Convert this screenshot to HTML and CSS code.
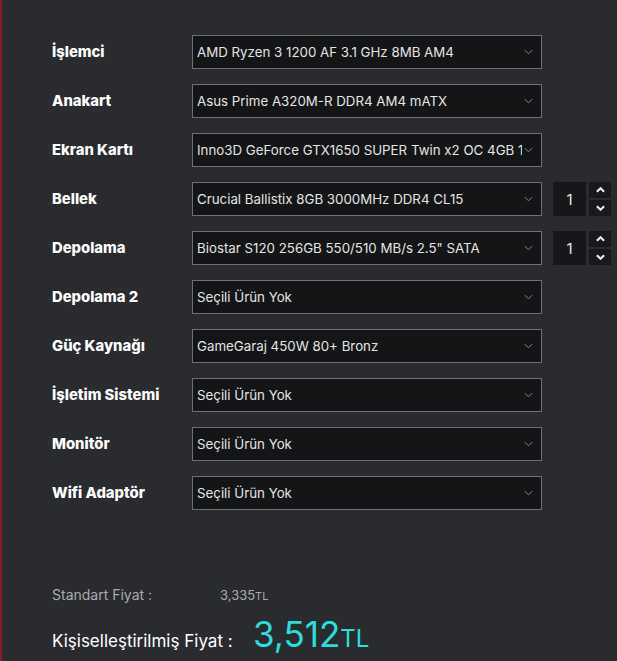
FILE: index.html
```html
<!DOCTYPE html>
<html lang="tr">
<head>
<meta charset="utf-8">
<link rel="stylesheet" href="styles.css">
</head>
<body>
<div class="page">
  <div class="form">
    <div class="row"><div class="label">İşlemci</div><div class="select"><span class="val">AMD Ryzen 3 1200 AF 3.1 GHz 8MB AM4</span><svg class="chev" viewBox="0 0 10 6"><path d="M1 1l4 4 4-4"/></svg></div></div>
    <div class="row"><div class="label">Anakart</div><div class="select"><span class="val">Asus Prime A320M-R DDR4 AM4 mATX</span><svg class="chev" viewBox="0 0 10 6"><path d="M1 1l4 4 4-4"/></svg></div></div>
    <div class="row"><div class="label">Ekran Kartı</div><div class="select"><span class="val">Inno3D GeForce GTX1650 SUPER Twin x2 OC 4GB 128bit</span><svg class="chev" viewBox="0 0 10 6"><path d="M1 1l4 4 4-4"/></svg></div></div>
    <div class="row"><div class="label">Bellek</div><div class="select"><span class="val">Crucial Ballistix 8GB 3000MHz DDR4 CL15</span><svg class="chev" viewBox="0 0 10 6"><path d="M1 1l4 4 4-4"/></svg></div>
      <div class="qty">1</div>
      <div class="spin"><div class="btn"><svg viewBox="0 0 10 6"><path d="M1 5l4-4 4 4"/></svg></div><div class="btn"><svg viewBox="0 0 10 6"><path d="M1 1l4 4 4-4"/></svg></div></div>
    </div>
    <div class="row"><div class="label">Depolama</div><div class="select"><span class="val">Biostar S120 256GB 550/510 MB/s 2.5" SATA</span><svg class="chev" viewBox="0 0 10 6"><path d="M1 1l4 4 4-4"/></svg></div>
      <div class="qty">1</div>
      <div class="spin"><div class="btn"><svg viewBox="0 0 10 6"><path d="M1 5l4-4 4 4"/></svg></div><div class="btn"><svg viewBox="0 0 10 6"><path d="M1 1l4 4 4-4"/></svg></div></div>
    </div>
    <div class="row"><div class="label">Depolama 2</div><div class="select"><span class="val">Seçili Ürün Yok</span><svg class="chev" viewBox="0 0 10 6"><path d="M1 1l4 4 4-4"/></svg></div></div>
    <div class="row"><div class="label">Güç Kaynağı</div><div class="select"><span class="val">GameGaraj 450W 80+ Bronz</span><svg class="chev" viewBox="0 0 10 6"><path d="M1 1l4 4 4-4"/></svg></div></div>
    <div class="row"><div class="label">İşletim Sistemi</div><div class="select"><span class="val">Seçili Ürün Yok</span><svg class="chev" viewBox="0 0 10 6"><path d="M1 1l4 4 4-4"/></svg></div></div>
    <div class="row"><div class="label">Monitör</div><div class="select"><span class="val">Seçili Ürün Yok</span><svg class="chev" viewBox="0 0 10 6"><path d="M1 1l4 4 4-4"/></svg></div></div>
    <div class="row"><div class="label">Wifi Adaptör</div><div class="select"><span class="val">Seçili Ürün Yok</span><svg class="chev" viewBox="0 0 10 6"><path d="M1 1l4 4 4-4"/></svg></div></div>
  </div>
  <div class="prices">
    <div class="std"><span class="std-label">Standart Fiyat :</span><span class="std-val">3,335<small>TL</small></span></div>
    <div class="cust"><span class="cust-label">Kişiselleştirilmiş Fiyat :</span><span class="cust-val">3,512<small>TL</small></span></div>
  </div>
</div>
</body>
</html>
```
FILE: styles.css
```css
html, body {
  margin: 0;
  padding: 0;
  background: #292b2f;
}
body {
  font-family: Inter, "Noto Sans", "Liberation Sans", sans-serif;
  color: #e6e6e6;
  height: 661px;
  overflow: hidden;
}
.page {
  border-left: 2px solid #8a1c20;
  min-height: 661px;
  box-sizing: border-box;
  padding: 35px 0 0 50px;
}
.form {
  display: flex;
  flex-direction: column;
  gap: 15px;
}
.row {
  display: flex;
  align-items: center;
  height: 34px;
}
.label {
  width: 140px;
  font-weight: 800;
  font-size: 14.8px;
  color: #ffffff;
  margin-top: -1px;
}
.select {
  width: 350px;
  height: 34px;
  box-sizing: border-box;
  border: 1px solid #6f7073;
  background: #141517;
  display: flex;
  align-items: center;
  padding: 0 8px 0 4px;
}
.val {
  flex: 1;
  font-size: 13.3px;
  color: #e4e4e4;
  white-space: nowrap;
  overflow: hidden;
}
.chev {
  width: 9px;
  height: 6px;
  margin-left: 2px;
  flex: none;
}
.chev path {
  fill: none;
  stroke: #8c8d90;
  stroke-width: 1.1;
}
.qty {
  margin-left: 11px;
  width: 33px;
  height: 34px;
  background: #161719;
  color: #e8e8e8;
  font-size: 15px;
  display: flex;
  align-items: center;
  justify-content: center;
}
.spin {
  margin-left: 3px;
  display: flex;
  flex-direction: column;
  gap: 2px;
  height: 34px;
}
.btn {
  width: 22px;
  height: 16px;
  background: #18191b;
  display: flex;
  align-items: center;
  justify-content: center;
}
.btn svg {
  width: 9px;
  height: 6px;
}
.btn path {
  fill: none;
  stroke: #f2f2f2;
  stroke-width: 2.2;
}
.prices {
  margin-top: 76px;
  display: flex;
  flex-direction: column;
  gap: 11px;
}
.std {
  display: flex;
  align-items: baseline;
  color: #a9aaad;
  font-size: 14px;
}
.std-label {
  width: 168px;
}
.std-val {
  font-size: 13px;
}
.std-val small {
  font-size: 11px;
}
.cust {
  display: flex;
  align-items: baseline;
}
.cust-label {
  font-size: 17px;
  color: #ffffff;
  width: 201px;
}
.cust-val {
  font-size: 35px;
  color: #27dfdc;
  line-height: 40px;
}
.cust-val small {
  font-size: 24px;
}
```
